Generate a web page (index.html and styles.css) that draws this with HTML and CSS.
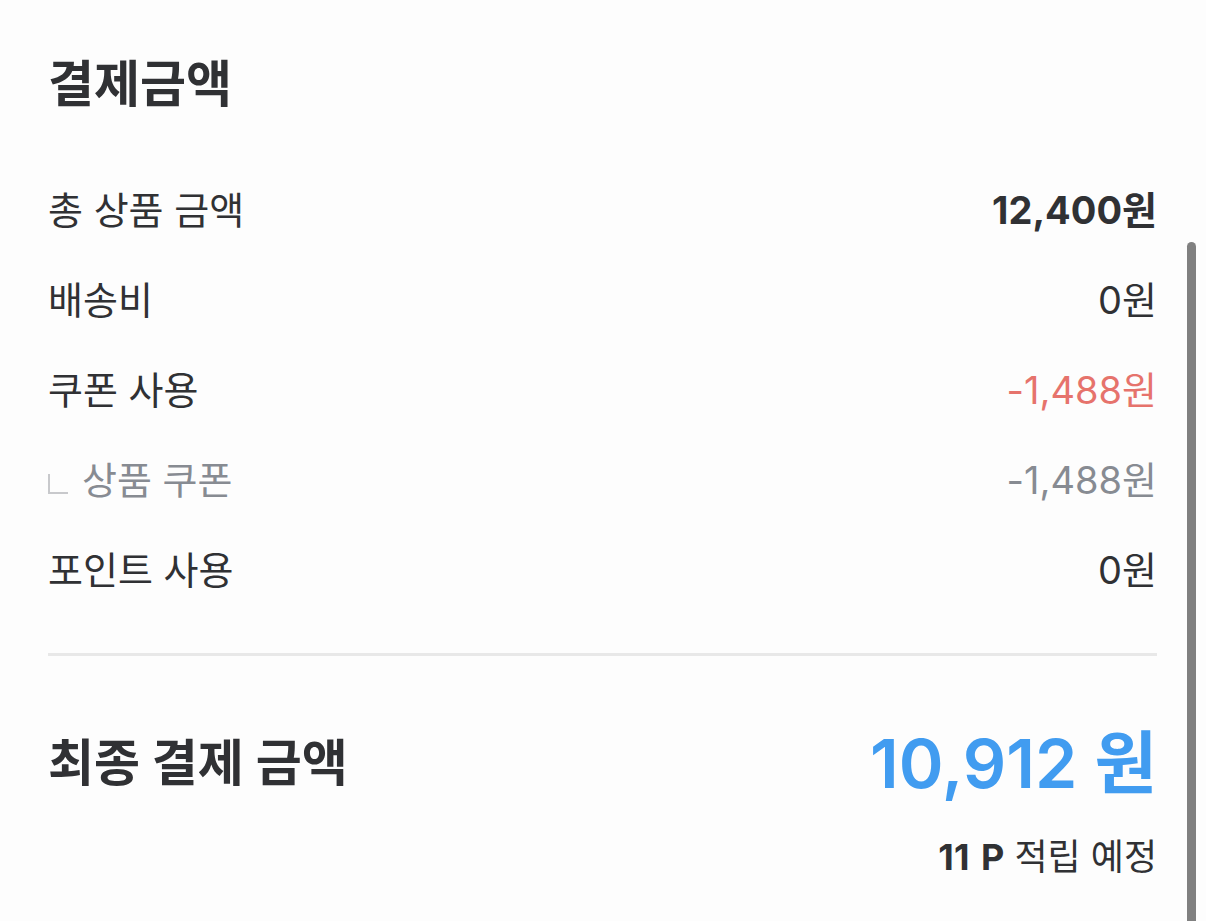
FILE: index.html
```html
<!DOCTYPE html>
<html lang="ko">
<head>
<meta charset="utf-8">
<link rel="stylesheet" href="styles.css">
</head>
<body>
<main class="panel">
  <h1 class="title">결제금액</h1>
  <div class="rows">
    <div class="row"><span class="label">총 상품 금액</span><span class="value bold">12,400원</span></div>
    <div class="row"><span class="label">배송비</span><span class="value">0원</span></div>
    <div class="row"><span class="label">쿠폰 사용</span><span class="value red">-1,488원</span></div>
    <div class="row sub"><span class="label"><span class="corner"></span>상품 쿠폰</span><span class="value">-1,488원</span></div>
    <div class="row"><span class="label">포인트 사용</span><span class="value">0원</span></div>
  </div>
  <hr class="divider">
  <div class="total">
    <span class="total-label">최종 결제 금액</span>
    <span class="total-value">10,912 원</span>
  </div>
  <div class="points"><b>11&nbsp;P</b> 적립 예정</div>
</main>
<div class="scrollbar"></div>
</body>
</html>
```
FILE: styles.css
```css
html, body {
  margin: 0;
  padding: 0;
  background: #fdfdfd;
  height: 100%;
  overflow: hidden;
}
body {
  font-family: "Inter", "Noto Sans CJK KR", sans-serif;
  color: #303134;
}
.panel {
  padding: 52px 49px 0 48px;
}
.title {
  margin: 0;
  font-size: 50px;
  font-weight: 700;
  line-height: 64px;
  letter-spacing: 0;
}
.rows {
  margin-top: 49px;
}
.row {
  display: flex;
  justify-content: space-between;
  align-items: center;
  height: 90px;
  font-size: 38px;
}
.label, .value {
  line-height: 44px;
}
.bold { font-weight: 700; }
.red { color: #e6736c; }
.sub { color: #878b92; }
.corner {
  display: inline-block;
  width: 18px;
  height: 18px;
  border-left: 2px solid #c8c9cc;
  border-bottom: 2px solid #c8c9cc;
  margin-right: 14px;
  vertical-align: 0px;
}
.divider {
  border: 0;
  height: 3px;
  background: #e8e8e8;
  margin: 38px 0 0 0;
}
.total {
  display: flex;
  justify-content: space-between;
  align-items: center;
  margin-top: 65px;
}
.total-label {
  font-size: 50px;
  font-weight: 700;
  line-height: 60px;
}
.total-value {
  font-size: 68px;
  font-weight: 600;
  color: #419cf0;
  line-height: 84px;
}
.points {
  text-align: right;
  font-size: 36px;
  margin-top: 30px;
  line-height: 44px;
}
.points b { font-weight: 700; word-spacing: 3px; }
.scrollbar {
  position: absolute;
  left: 1187px;
  top: 242px;
  width: 9px;
  height: 700px;
  background: #808080;
  border-radius: 5px 5px 0 0;
}
```
